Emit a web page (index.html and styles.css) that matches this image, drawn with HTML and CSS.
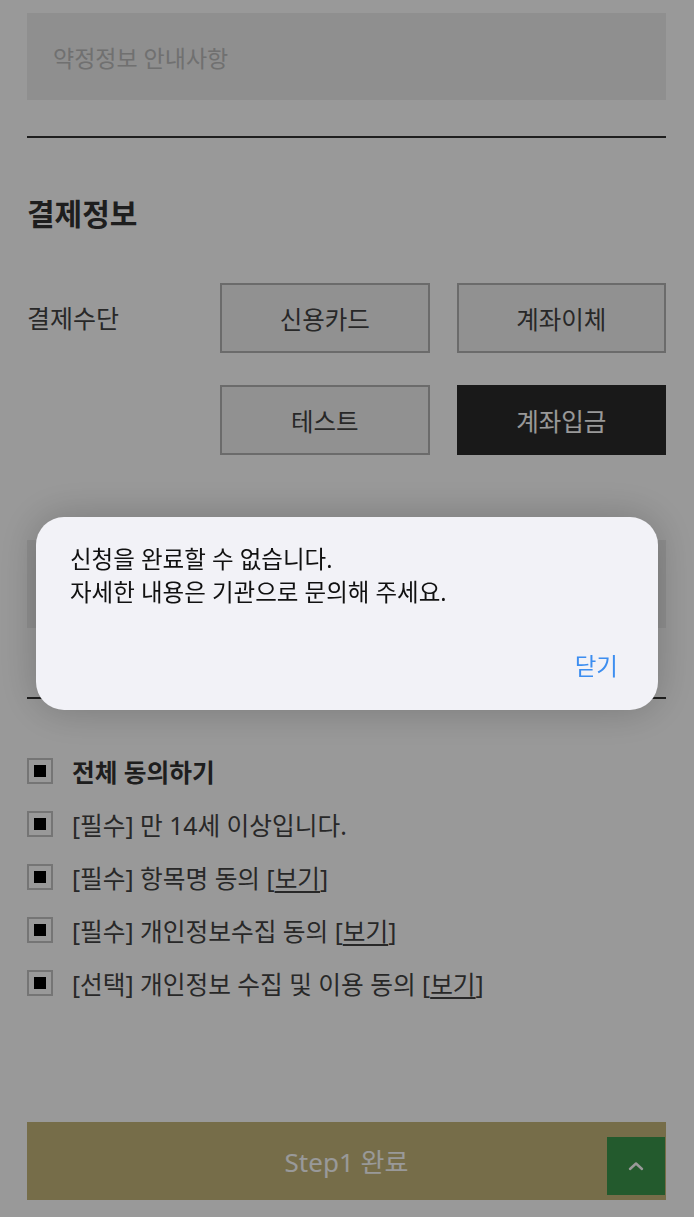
FILE: index.html
```html
<!DOCTYPE html>
<html lang="ko">
<head>
<meta charset="utf-8">
<title>결제정보</title>
<link rel="stylesheet" href="styles.css">
</head>
<body>
<main class="page">
  <div class="notice">약정정보 안내사항</div>
  <hr class="divider divider-top">

  <h2 class="section-title">결제정보</h2>

  <div class="pay-row">
    <div class="pay-label">결제수단</div>
    <div class="pay-options">
      <button class="pay-btn" type="button">신용카드</button>
      <button class="pay-btn" type="button">계좌이체</button>
      <button class="pay-btn" type="button">테스트</button>
      <button class="pay-btn is-active" type="button">계좌입금</button>
    </div>
  </div>

  <div class="account-box"></div>
  <hr class="divider divider-agree">

  <ul class="agree-list">
    <li class="agree-item agree-all"><span class="check"></span><span>전체 동의하기</span></li>
    <li class="agree-item"><span class="check"></span><span>[필수] 만 14세 이상입니다.</span></li>
    <li class="agree-item"><span class="check"></span><span>[필수] 항목명 동의 [<a class="view">보기</a>]</span></li>
    <li class="agree-item"><span class="check"></span><span>[필수] 개인정보수집 동의 [<a class="view">보기</a>]</span></li>
    <li class="agree-item"><span class="check"></span><span>[선택] 개인정보 수집 및 이용 동의 [<a class="view">보기</a>]</span></li>
  </ul>

  <button class="submit-btn" type="button">Step1 완료</button>
</main>

<button class="top-btn" type="button" aria-label="맨 위로">
  <svg width="18" height="12" viewBox="0 0 18 12"><path d="M3 9 L9 3.5 L15 9" fill="none" stroke="#ffffff" stroke-width="2.4" stroke-linecap="round" stroke-linejoin="round"/></svg>
</button>

<div class="overlay"></div>

<div class="alert" role="alertdialog">
  <p class="alert-msg">신청을 완료할 수 없습니다.<br>자세한 내용은 기관으로 문의해 주세요.</p>
  <div class="alert-actions"><button class="alert-close" type="button">닫기</button></div>
</div>
</body>
</html>
```

FILE: styles.css
```css
html, body {
  margin: 0;
  padding: 0;
  background: #ffffff;
}
body {
  font-family: "Noto Sans", "Noto Sans CJK KR", sans-serif;
  color: #444444;
}
.page {
  padding: 13px 28px 16px 27px;
}
.notice {
  height: 87px;
  background: #eeeeee;
  display: flex;
  align-items: center;
  padding-left: 26px;
  font-size: 23px;
  color: #bbbbbb;
}
.divider {
  border: 0;
  border-top: 2px solid #333333;
  margin: 0;
  height: 0;
}
.divider-top {
  margin-top: 36px;
}
.section-title {
  margin: 56px 0 0;
  font-size: 30px;
  line-height: 40px;
  font-weight: 700;
  color: #333333;
}
.pay-row {
  display: flex;
  margin-top: 49px;
}
.pay-label {
  width: 193px;
  flex: none;
  font-size: 25px;
  line-height: 70px;
}
.pay-options {
  flex: 1;
  display: grid;
  grid-template-columns: 1fr 1fr;
  gap: 32px 27px;
}
.pay-btn {
  height: 70px;
  border: 2px solid #b3b3b3;
  background: #f2f2f2;
  font-family: inherit;
  font-size: 24.5px;
  color: #444444;
  padding: 0;
}
.pay-btn.is-active {
  background: #2b2b2b;
  border-color: #2b2b2b;
  color: #ffffff;
}
.account-box {
  margin-top: 85px;
  height: 88px;
  background: #eeeeee;
}
.divider-agree {
  margin-top: 69px;
}
.agree-list {
  list-style: none;
  margin: 45px 0 0;
  padding: 0;
}
.agree-item {
  display: flex;
  align-items: center;
  height: 53px;
  font-size: 24.7px;
  color: #444444;
}
.agree-all {
  font-weight: 700;
  color: #333333;
}
.check {
  width: 26px;
  height: 26px;
  box-sizing: border-box;
  border: 2px solid #c4c4c4;
  background: #ffffff;
  display: flex;
  align-items: center;
  justify-content: center;
  margin-right: 19px;
  flex: none;
}
.check::before {
  content: "";
  width: 12px;
  height: 12px;
  background: #000000;
}
.view {
  color: inherit;
  text-decoration: underline;
  text-underline-offset: 3px;
}
.submit-btn {
  display: block;
  width: 100%;
  margin-top: 113px;
  height: 78px;
  border: 0;
  background: #c5b67b;
  color: #ffffff;
  font-family: "Noto Sans", "Noto Sans CJK KR", sans-serif;
  font-size: 26px;
  padding: 0;
}
.top-btn {
  position: fixed;
  right: 29px;
  bottom: 22px;
  width: 58px;
  height: 58px;
  border: 0;
  padding: 0;
  background: #3b964c;
  display: flex;
  align-items: center;
  justify-content: center;
}
.overlay {
  position: fixed;
  inset: 0;
  background: rgba(0, 0, 0, 0.4);
  z-index: 10;
}
.alert {
  position: fixed;
  z-index: 20;
  top: 517px;
  left: 36px;
  width: 622px;
  box-sizing: border-box;
  padding: 26px 40px 27px 34px;
  background: #f2f2f7;
  border-radius: 28px;
  box-shadow: 0 0 40px rgba(0, 0, 0, 0.22);
}
.alert-msg {
  margin: 0;
  font-size: 23.5px;
  line-height: 33px;
  color: #111111;
}
.alert-actions {
  margin-top: 41px;
  display: flex;
  justify-content: flex-end;
}
.alert-close {
  border: 0;
  background: none;
  padding: 0;
  font-family: inherit;
  font-size: 23.5px;
  line-height: 33px;
  color: #3d8ef0;
}
```
